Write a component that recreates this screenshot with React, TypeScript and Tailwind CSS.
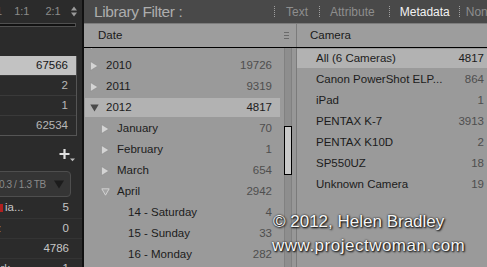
import React from "react";

// ============================================
// Small drawings
// ============================================

const Closed = () => (
  <svg width="8" height="10" viewBox="0 0 8 10">
    <path d="M0.5 0.5 L7.8 5 L0.5 9.5 Z" fill="#d4d4d4" stroke="#8c8c8c" strokeWidth="0.6" />
  </svg>
);

const OpenDark = () => (
  <svg width="9" height="8" viewBox="0 0 9 8">
    <path d="M0.3 0.5 L8.7 0.5 L4.5 7.5 Z" fill="#4a4a4a" />
  </svg>
);

const OpenHollow = () => (
  <svg width="9" height="8" viewBox="0 0 9 8">
    <path d="M0.8 0.8 L8.2 0.8 L4.5 7.2 Z" fill="#a4a4a4" stroke="#d6d6d6" strokeWidth="0.9" />
  </svg>
);

const UpDown = () => (
  <svg width="6" height="11" viewBox="0 0 6 11">
    <path d="M0 4.5 L3 0.5 L6 4.5 Z" fill="#9a9a9a" />
    <path d="M0 6.5 L3 10.5 L6 6.5 Z" fill="#9a9a9a" />
  </svg>
);

const PlusMenu = () => (
  <svg width="17" height="14" viewBox="0 0 17 14">
    <path d="M5.5 1 V11 M0.5 6 H10.5" stroke="#e0e0e0" strokeWidth="2.2" />
    <path d="M11 10.5 L16 10.5 L13.5 13.2 Z" fill="#bdbdbd" />
  </svg>
);

const Dots = () => <span className="block h-[11px] border-l border-dotted border-[#a0a0a0]" />;

// ============================================
// Data
// ============================================

type Tri = "closed" | "open" | "hollow" | "none";

const dates: { label: string; count: string; level: number; tri: Tri; on?: boolean }[] = [
  { label: "2009", count: "1406", level: 0, tri: "closed" },
  { label: "2010", count: "19726", level: 0, tri: "closed" },
  { label: "2011", count: "9319", level: 0, tri: "closed" },
  { label: "2012", count: "4817", level: 0, tri: "open", on: true },
  { label: "January", count: "70", level: 1, tri: "closed" },
  { label: "February", count: "1", level: 1, tri: "closed" },
  { label: "March", count: "654", level: 1, tri: "closed" },
  { label: "April", count: "2942", level: 1, tri: "hollow" },
  { label: "14 - Saturday", count: "4", level: 2, tri: "none" },
  { label: "15 - Sunday", count: "33", level: 2, tri: "none" },
  { label: "16 - Monday", count: "282", level: 2, tri: "none" },
  { label: "17 - Tuesday", count: "126", level: 2, tri: "none" },
];

const cameras: { label: string; count: string; on?: boolean }[] = [
  { label: "All (6 Cameras)", count: "4817", on: true },
  { label: "Canon PowerShot ELP...", count: "864" },
  { label: "iPad", count: "1" },
  { label: "PENTAX K-7", count: "3913" },
  { label: "PENTAX K10D", count: "2" },
  { label: "SP550UZ", count: "18" },
  { label: "Unknown Camera", count: "19" },
];

const pad = ["pl-[5px]", "pl-[16px]", "pl-[27px]"];

// ============================================
// Panels
// ============================================

const LeftPanel = () => (
  <div className="w-[82px] shrink-0 bg-[#2b2b2b] flex flex-col overflow-hidden text-[11.5px] whitespace-nowrap [&>*]:shrink-0">
    <div className="h-[23px] flex items-center text-[11px] text-[#8c8c8c]">
      <span className="-ml-[4px]">1</span>
      <span className="ml-[12px]">1:1</span>
      <span className="ml-[16px]">2:1</span>
      <span className="ml-[10px] flex">
        <UpDown />
      </span>
    </div>
    <div className="h-[4px] w-[78px] -ml-[2px] border border-[#505050] bg-[#121212]" />
    <div className="h-[29px]" />
    <div className="w-[77px] border-r border-b border-[#555] flex flex-col">
      <div className="h-[19px] bg-[#c2c2c2] flex items-center justify-end pr-[8px] text-[#161616]">67566</div>
      {["2", "1", "62534"].map((n) => (
        <div key={n} className="h-[20px] border-t border-[#3a3a3a] flex items-center justify-end pr-[8px] text-[#b8b8b8]">
          {n}
        </div>
      ))}
    </div>
    <div className="h-[12px]" />
    <div className="flex justify-end pr-[6px] h-[14px]">
      <PlusMenu />
    </div>
    <div className="h-[9px]" />
    <div className="h-[26px] w-[76px] -ml-[5px] rounded-[4px] border border-[#4e4e4e] bg-[#353535] flex items-center">
      <span className="pl-[3px] text-[10px] tracking-[-0.4px] text-[#8a8a8a]">0.3 / 1.3 TB</span>
      <span className="ml-auto mr-[6px] flex">
        <svg width="10" height="9" viewBox="0 0 10 9">
          <path d="M0 0.5 L10 0.5 L5 8.5 Z" fill="#1c1c1c" />
        </svg>
      </span>
    </div>
    <div className="h-[1px]" />
    {[
      ["ia...", "5"],
      [":", "0"],
      ["", "4786"],
      ["ark", "1"],
    ].map(([a, b], i) => (
      <div key={i} className={`h-[20px] flex items-center pr-[13px] text-[#c6c6c6] ${i ? "border-t border-[#343434]" : ""}`}>
        {i === 0 && <span className="w-[3px] h-[8px] bg-[#b02020] mr-[2px]" />}
        <span className={i === 3 ? "-ml-[6px]" : i === 1 ? "-ml-[2px]" : ""}>{a}</span>
        <span className="ml-auto">{b}</span>
      </div>
    ))}
  </div>
);

const TopBar = () => (
  <div className="h-[24px] shrink-0 bg-[#494949] flex items-center border-b border-[#7d7d7d] whitespace-nowrap overflow-hidden [&>*]:shrink-0">
    <span className="ml-[10px] w-[180px] text-[15.5px] tracking-[-0.4px] text-[#adadad]">Library Filter :</span>
    <span className="flex items-center text-[12px] text-[#8e8e8e]">
      <Dots />
      <span className="ml-[11px]">Text</span>
      <span className="ml-[11px]"><Dots /></span>
      <span className="ml-[10px]">Attribute</span>
      <span className="ml-[14px]"><Dots /></span>
      <span className="ml-[10px] text-[#f2f2f2]">Metadata</span>
      <span className="ml-[9px]"><Dots /></span>
      <span className="ml-[6px]">None</span>
    </span>
  </div>
);

const Header = () => (
  <div className="h-[24px] shrink-0 bg-[#9d9d9d] border-b border-black flex text-[11.5px] text-[#1a1a1a]">
    <div className="w-[212px] flex items-center pl-[14px]">
      <span>Date</span>
      <span className="ml-auto mr-[7px] flex flex-col gap-[2px]">
        <span className="w-[5px] h-[1px] bg-[#6a6a6a]" />
        <span className="w-[5px] h-[1px] bg-[#6a6a6a]" />
        <span className="w-[5px] h-[1px] bg-[#6a6a6a]" />
      </span>
    </div>
    <div className="flex-1 border-l border-[#7b7b7b] flex items-center pl-[13px]">Camera</div>
  </div>
);

const DateList = () => (
  <div className="w-[200px] shrink-0 flex flex-col overflow-hidden whitespace-nowrap">
    {dates.map((d, i) => (
      <div key={d.label} className={`h-[21px] shrink-0 py-[1px] pl-[1px] pr-[4px] ${i === 0 ? "-mt-[14px]" : ""}`}>
        <div className={`h-full flex items-center pr-[8px] ${pad[d.level]} ${d.on ? "bg-[#b2b2b2]" : ""}`}>
          <span className="w-[16px] flex items-center">
            {d.tri === "closed" && <Closed />}
            {d.tri === "open" && <OpenDark />}
            {d.tri === "hollow" && <OpenHollow />}
          </span>
          <span className="text-[#1c1c1c]">{d.label}</span>
          <span className={`ml-auto ${d.on ? "text-[#1c1c1c]" : "text-[#4e4e4e]"}`}>{d.count}</span>
        </div>
      </div>
    ))}
  </div>
);

const Scroll = () => (
  <div className="w-[12px] flex shrink-0">
    <div className="w-[8px] border-x border-[#818181] bg-[#8e8e8e] flex flex-col">
      <div className="-mx-[1px] mt-[78px] h-[49px] shrink-0 border border-black bg-[#c9c9c9]" />
    </div>
    <div className="w-[4px] bg-[#979797]" />
  </div>
);

const CameraList = () => (
  <div className="flex-1 border-l border-[#7b7b7b] flex flex-col whitespace-nowrap overflow-hidden">
    {cameras.map((c) => (
      <div key={c.label} className="h-[21px] shrink-0 py-[1px]">
        <div className={`h-full flex items-center pl-[19px] pr-[3px] ${c.on ? "bg-[#b2b2b2]" : ""}`}>
          <span className="text-[#1c1c1c]">{c.label}</span>
          <span className={`ml-auto ${c.on ? "text-[#1c1c1c]" : "text-[#4e4e4e]"}`}>{c.count}</span>
        </div>
      </div>
    ))}
  </div>
);

// ============================================
// Main Component
// ============================================

export default function App() {
  return (
    <div className="relative w-[487px] h-[267px] overflow-hidden flex bg-[#9a9a9a] [font-family:'Liberation_Sans',Arial,sans-serif]">
      <LeftPanel />
      <div className="w-[2px] shrink-0 bg-[#111]" />
      <div className="flex-1 flex flex-col min-w-0">
        <TopBar />
        <Header />
        <div className="flex-1 flex text-[11.5px] bg-[#9a9a9a] min-h-0">
          <DateList />
          <Scroll />
          <CameraList />
        </div>
      </div>
      <div className="absolute left-[272px] top-[210px] text-[17px] leading-[24px] text-[#f6f6f6] whitespace-nowrap [text-shadow:0_0_2px_#000,1px_1px_2px_#000]">
        <div className="ml-[1px]">© 2012, Helen Bradley</div>
        <div className="tracking-[0.5px]">www.projectwoman.com</div>
      </div>
    </div>
  );
}
